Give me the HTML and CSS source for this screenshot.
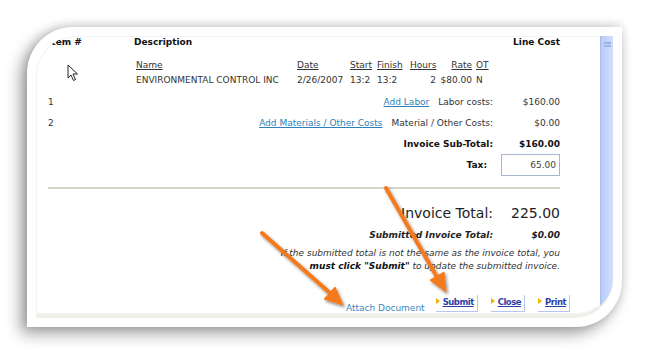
FILE: index.html
```html
<!DOCTYPE html>
<html>
<head>
    <meta charset="utf-8">
    <title>Invoice</title>
    <link rel="stylesheet" href="styles.css">
</head>
<body>
    <div class="card">
        <div class="screen">
            <div class="content">
                <div class="head">
                    <span class="col-item">Item #</span>
                    <span class="col-desc">Description</span>
                    <span class="col-cost">Line Cost</span>
                </div>

                <div class="labor">
                    <div class="labor-row labor-head">
                        <span>Name</span><span>Date</span><span>Start</span><span>Finish</span>
                        <span class="num">Hours</span><span class="num">Rate</span><span class="ot">OT</span>
                    </div>
                    <div class="labor-row">
                        <span>ENVIRONMENTAL CONTROL INC</span><span>2/26/2007</span><span>13:2</span><span>13:2</span>
                        <span class="num">2</span><span class="num">$80.00</span><span class="ot">N</span>
                    </div>
                </div>

                <div class="line">
                    <span class="item">1</span>
                    <a class="add" href="javascript:;">Add Labor</a>
                    <span class="label">Labor costs:</span>
                    <span class="value">$160.00</span>
                </div>
                <div class="line">
                    <span class="item">2</span>
                    <a class="add" href="javascript:;">Add Materials / Other Costs</a>
                    <span class="label">Material / Other Costs:</span>
                    <span class="value">$0.00</span>
                </div>
                <div class="line strong">
                    <span class="label">Invoice Sub-Total:</span>
                    <span class="value">$160.00</span>
                </div>
                <div class="line tax">
                    <span class="label">Tax:</span>
                    <span class="value"><input class="tax-input" type="text" value="65.00"></span>
                </div>

                <div class="rule"></div>

                <div class="total">
                    <span class="label">Invoice Total:</span>
                    <span class="value">225.00</span>
                </div>
                <div class="submitted">
                    <span class="label">Submitted Invoice Total:</span>
                    <span class="value">$0.00</span>
                </div>
                <p class="note">
                    If the submitted total is not the same as the invoice total, you<br>
                    <b>must click "Submit"</b> to update the submitted invoice.
                </p>

                <div class="actions">
                    <a class="attach" href="javascript:;">Attach Document</a>
                    <a class="btn" href="javascript:;">Submit</a>
                    <a class="btn" href="javascript:;">Close</a>
                    <a class="btn" href="javascript:;">Print</a>
                </div>
            </div>
            <div class="scrollbar"><div class="grip"></div></div>
        </div>
    </div>

    <!-- mouse pointer -->
    <svg class="cursor" width="12" height="18" viewBox="0 0 12 18">
        <path d="M1 1 L1 14 L4 11 L6.5 16.5 L8.5 15.5 L6 10 L10.5 10 Z" fill="#fff" stroke="#222" stroke-width="1" stroke-linejoin="round"/>
    </svg>

    <!-- callout arrows -->
    <svg class="arrows" width="650" height="354" viewBox="0 0 650 354">
        <defs>
            <filter id="shade" x="-20%" y="-20%" width="140%" height="140%">
                <feDropShadow dx="1.5" dy="2" stdDeviation="1.5" flood-color="#000" flood-opacity="0.45"/>
            </filter>
        </defs>
        <g filter="url(#shade)" fill="#f47a1c" stroke="#f47a1c">
            <line x1="262" y1="233" x2="330" y2="293" stroke-width="4" stroke-linecap="round"/>
            <polygon points="343,305 324,299 335,287" stroke-width="1" stroke-linejoin="round"/>
            <line x1="386" y1="188" x2="437" y2="277" stroke-width="4" stroke-linecap="round"/>
            <polygon points="446,292 430,280 444,272" stroke-width="1" stroke-linejoin="round"/>
        </g>
    </svg>
</body>
</html>
```

FILE: styles.css
```css
html,
body {
    margin: 0;
    padding: 0;
    overflow: hidden;
}

body {
    width: 650px;
    height: 354px;
    background: #fff;
    font: 9px/12px "DejaVu Sans", Verdana, sans-serif;
    color: #333;
    padding: 27px 0 0 27px;
    box-sizing: border-box;
}

a {
    color: #2d7fb8;
}

/* the cut-out paper sheet */
.card {
    width: 595px;
    height: 300px;
    background: #fff;
    border-radius: 46px 0 46px 0;
    box-shadow: -6px 6px 16px rgba(0, 0, 0, 0.4), 0 -2px 10px rgba(0, 0, 0, 0.12);
    padding: 9px;
    box-sizing: border-box;
}

.screen {
    display: flex;
    height: 282px;
    border-radius: 40px 0 38px 0;
    border-bottom: 4px solid #efefe9;
    box-shadow: inset 0 0 0 1px #f3f3f3;
    overflow: hidden;
    box-sizing: border-box;
}

.content {
    flex: 1;
    padding: 0 40px 0 12px;
}

.scrollbar {
    width: 13px;
    height: 276px;
    background: linear-gradient(to right, #b9cbf6, #c8d7fb 60%, #d3def9);
    border-left: 1px solid #a9bdee;
    box-sizing: border-box;
    padding: 6px 0 0 3px;
}

.grip {
    width: 7px;
    height: 5px;
    border-top: 1px solid #9db2e6;
    border-bottom: 1px solid #9db2e6;
    background: linear-gradient(#c8d7fb 1px, #9db2e6 1px, #9db2e6 2px, #c8d7fb 2px);
    background-size: 100% 2px;
    background-position: 0 1px;
    box-sizing: border-box;
}

/* header */
.head {
    display: flex;
    height: 22px;
    font-weight: bold;
    color: #111;
}

.col-item {
    width: 86px;
}

.col-desc {
    flex: 1;
}

/* labor detail */
.labor {
    padding-left: 88px;
    margin-bottom: 3px;
}

.labor-row {
    display: grid;
    grid-template-columns: 161px 53px 27px 33px 26px 36px auto;
    line-height: 15px;
}

.labor-head span {
    text-decoration: underline;
}

.labor-row .num {
    text-align: right;
}

.labor-row .ot {
    padding-left: 4px;
}

/* cost lines */
.line {
    display: flex;
    align-items: center;
    justify-content: flex-end;
    height: 21px;
}

.line .item {
    margin-right: auto;
}

.line .add {
    margin-right: 9px;
}

.value {
    width: 67px;
    text-align: right;
}

.strong {
    font-weight: bold;
    color: #111;
}

.tax {
    height: 22px;
    font-weight: bold;
    color: #111;
}

.tax .label {
    padding-right: 6px;
}

.tax .value {
    display: flex;
    justify-content: flex-end;
}

.tax-input {
    width: 59px;
    height: 22px;
    box-sizing: border-box;
    border: 1px solid #a7b7cf;
    padding: 0 3px;
    margin: 0;
    text-align: right;
    font: 9px "DejaVu Sans", Verdana, sans-serif;
    color: #444;
}

.rule {
    height: 2px;
    background: #d6d3c8;
    margin: 11px 0 14px;
}

/* totals */
.total {
    display: flex;
    justify-content: flex-end;
    font-size: 14px;
    line-height: 20px;
    color: #222;
}

.submitted {
    display: flex;
    justify-content: flex-end;
    margin-top: 5px;
    line-height: 14px;
    font-weight: bold;
    font-style: italic;
    color: #222;
}

.note {
    margin: 5px 0 0;
    text-align: right;
    font-style: italic;
    line-height: 13px;
    color: #333;
}

.note b {
    color: #111;
}

/* bottom buttons */
.actions {
    display: flex;
    justify-content: flex-end;
    align-items: flex-start;
    margin: 22px -10px 0 0;
}

.attach {
    text-decoration: none;
    color: #3a87bd;
    margin: 7px 11px 0 0;
}

.btn {
    position: relative;
    padding: 1px 3px 3px 7px;
    margin-left: 13px;
    font-size: 8.5px;
    letter-spacing: -0.5px;
    font-weight: bold;
    color: #2b3fa6;
    border-right: 1px solid #b8c6ea;
    border-bottom: 1px solid #b8c6ea;
}

.btn::before {
    content: "";
    position: absolute;
    left: 0;
    top: 3px;
    border-left: 4px solid #f2b400;
    border-top: 3px solid transparent;
    border-bottom: 3px solid transparent;
}

.attach + .btn {
    margin-left: 0;
}

/* overlays */
.cursor {
    position: absolute;
    left: 67px;
    top: 64px;
}

.arrows {
    position: absolute;
    left: 0;
    top: 0;
    pointer-events: none;
}
```
